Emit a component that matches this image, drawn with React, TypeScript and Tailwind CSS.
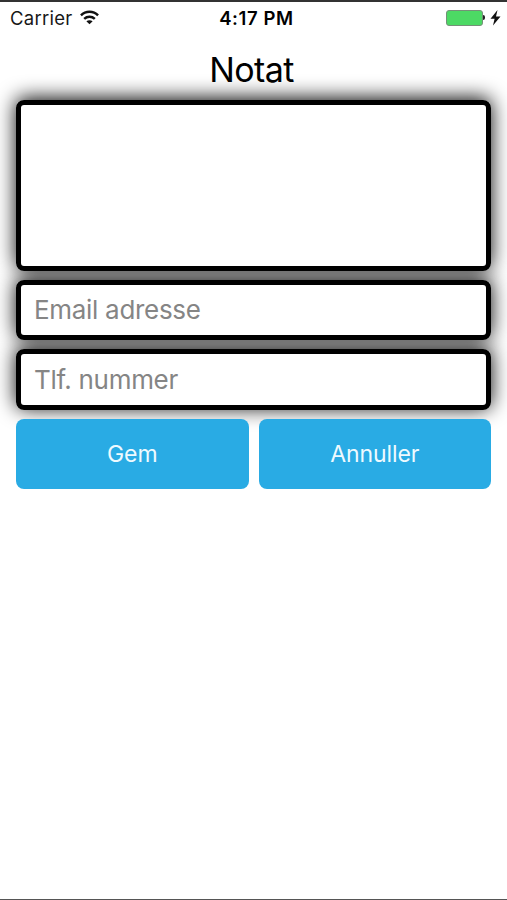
import type { ReactNode } from "react";

function WifiIcon() {
  return (
    <svg className="-mt-[3px]" width="19" height="15" viewBox="0 0 20 15" fill="none" stroke="#111" strokeWidth="2.6">
      <path d="M1 5.2C6 .2 14 .2 19 5.2" />
      <path d="M4.4 8.9C7.6 5.9 12.4 5.9 15.6 8.9" />
      <path d="M10 14.5 6.7 11.4C8.7 9.9 11.3 9.9 13.3 11.4Z" fill="#111" stroke="none" />
    </svg>
  );
}

function StatusBar() {
  return (
    <header className="grid h-[33px] grid-cols-3 items-center px-[10px] text-[#171717]">
      <div className="flex items-center gap-[8px]">
        <span className="text-[18.5px] tracking-[0.25px]">Carrier</span>
        <WifiIcon />
      </div>
      <div className="pl-[6px] text-center text-[18.5px] font-semibold tracking-[0.6px] whitespace-nowrap text-black">
        4:17 PM
      </div>
      <div className="-mr-[4px] flex items-center justify-end pb-[2px]">
        <div className="h-[16px] w-[37px] rounded-[3px] border border-[#759078] bg-[#4cd964]" />
        <div className="h-[5px] w-[2px] rounded-r-sm bg-[#222]" />
        <svg className="ml-[5px]" width="11" height="16" viewBox="0 0 11 16" fill="#111">
          <path d="M7.5 0 .5 8.8H4.6L3 15.5 10.5 6.5H6Z" />
        </svg>
      </div>
    </header>
  );
}

function ActionButton({ children }: { children: ReactNode }) {
  return (
    <button className="flex-1 rounded-[8px] bg-[#29abe4] pt-[2px] text-[23px] tracking-[-0.1px] text-[#eefaff]">
      {children}
    </button>
  );
}

function Glow({ children }: { children: ReactNode }) {
  return <div className="rounded-[8px] shadow-[0_-2px_20px_rgba(0,0,0,0.98)]">{children}</div>;
}

// Frames sit above every glow, so a neighbour's shadow never darkens their inside.
const frame =
  "relative z-10 block w-full resize-none rounded-[8px] border-5 border-black bg-white outline-none placeholder:text-[#858585] placeholder:opacity-100";
const field = `${frame} h-[60.5px] px-[13px] text-[26px] tracking-[-0.3px]`;

export default function App() {
  return (
    <main className="flex h-[900px] w-[507px] flex-col overflow-hidden border-t-2 border-b border-t-[#333] border-b-[#555] bg-white font-[Inter,sans-serif]">
      <StatusBar />
      <h1 className="relative z-10 mt-[10px] h-[54.5px] pr-[4px] text-center text-[34px] leading-[50px] tracking-[-0.6px] text-black">
        Notat
      </h1>
      <form className="flex flex-col gap-[9px] px-4">
        <Glow>
          <textarea aria-label="Notat" className={`${frame} h-[171px]`} />
        </Glow>
        <Glow>
          <input placeholder="Email adresse" className={field} />
        </Glow>
        <Glow>
          <input placeholder="Tlf. nummer" className={field} />
        </Glow>
        <div className="relative flex h-[70px] gap-[10px]">
          <ActionButton>Gem</ActionButton>
          <ActionButton>Annuller</ActionButton>
        </div>
      </form>
    </main>
  );
}
